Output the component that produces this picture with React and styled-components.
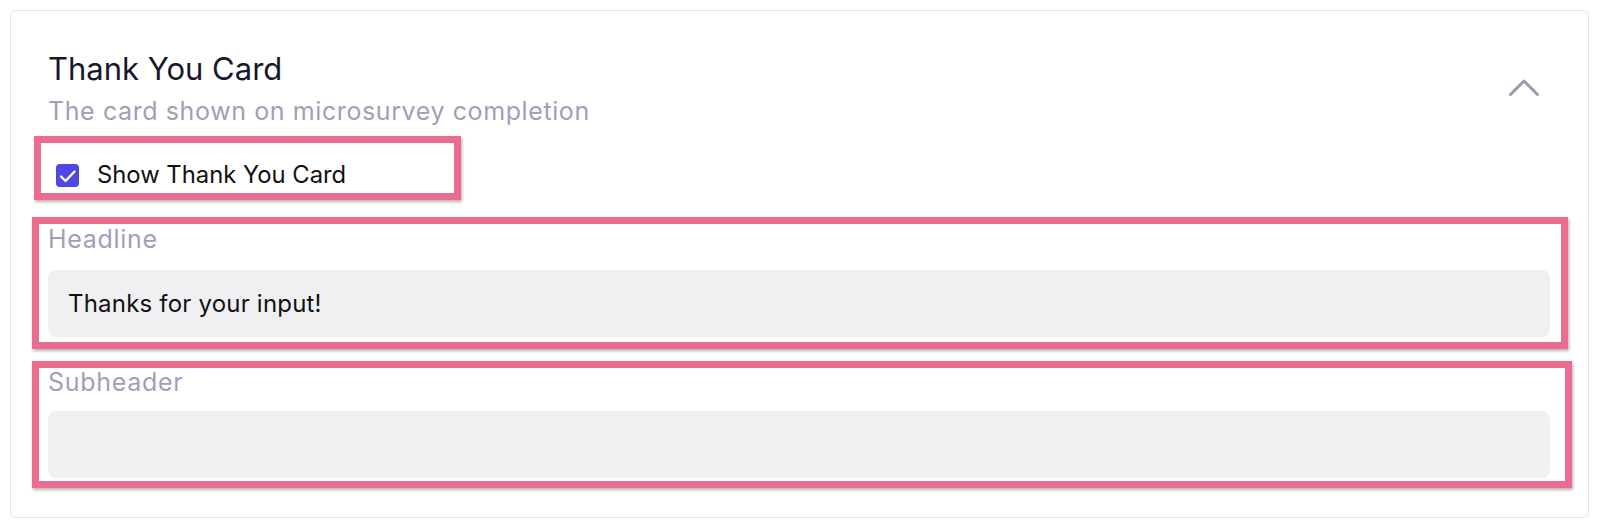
import React from 'react';
import styled, { createGlobalStyle } from 'styled-components';

const GlobalStyle = createGlobalStyle`
  body {
    margin: 0;
    background: #fff;
    font-family: Inter, "Noto Sans", "Liberation Sans", sans-serif;
  }
`;

const Card = styled.section`
  width: 1579px;
  height: 508px;
  margin: 10px 0 0 10px;
  box-sizing: border-box;
  border: 1px solid #e4e4eb;
  border-radius: 6px;
  padding: 39px 16px 0 21px;
  display: flex;
  flex-direction: column;
`;

const Header = styled.div`
  display: flex;
  justify-content: space-between;
  align-items: flex-start;
  padding-left: 16px;
`;

const Title = styled.h2`
  margin: 0;
  font-size: 31px;
  line-height: 38px;
  font-weight: 400;
  color: #17172c;
`;

const Subtitle = styled.p`
  margin: 8px 0 0 0;
  font-size: 25px;
  line-height: 30px;
  letter-spacing: 0.6px;
  color: #a19fb5;
`;

const Toggle = styled.button`
  width: 36px;
  height: 36px;
  margin: 20px 30px 0 0;
  padding: 0;
  border: none;
  background: none;
  svg {
    display: block;
  }
`;

// pink review frames round each setting
const CheckFrame = styled.label`
  width: 427px;
  height: 64px;
  margin: 10px 0 0 2px;
  box-sizing: border-box;
  border: 7px solid #ec6b90;
  box-shadow: 1px 2px 3px rgba(0, 0, 0, 0.3);
  padding: 18px 0 4px 15px;
  display: flex;
  align-items: center;
  gap: 18px;
  font-size: 23.8px;
  line-height: 28px;
  color: #111;
`;

const Box = styled.span`
  width: 23px;
  height: 23px;
  border-radius: 4px;
  background: #4f46e5;
  display: flex;
  align-items: center;
  justify-content: center;
`;

const FieldFrame = styled.div`
  margin: ${p => p.$mt}px ${p => p.$mr}px 0 0;
  box-sizing: border-box;
  border: 7px solid #ec6b90;
  box-shadow: 1px 2px 3px rgba(0, 0, 0, 0.3);
  padding: ${p => p.$pt}px ${p => p.$pr}px ${p => p.$pb}px 9px;
  display: flex;
  flex-direction: column;
  gap: ${p => p.$gap}px;
`;

const Label = styled.span`
  font-size: 25px;
  line-height: 24px;
  letter-spacing: 0.7px;
  color: #a19fb5;
`;

const Input = styled.input`
  width: 100%;
  height: 67px;
  box-sizing: border-box;
  border: none;
  outline: none;
  border-radius: 8px;
  background: #f0f0f3;
  padding: 0 20px;
  font-family: inherit;
  font-size: 24px;
  letter-spacing: 0.2px;
  color: #111;
`;

const App = () => {
  return (
    <>
      <GlobalStyle />
      <Card>
        <Header>
          <div>
            <Title>Thank You Card</Title>
            <Subtitle>The card shown on microsurvey completion</Subtitle>
          </div>
          <Toggle aria-label="collapse">
            <svg width="36" height="36" viewBox="0 0 36 36" fill="none">
              <polyline points="4.5,24.5 18,11 31.5,24.5" stroke="#9b9aae" strokeWidth="3" strokeLinecap="round" strokeLinejoin="round" />
            </svg>
          </Toggle>
        </Header>
        <CheckFrame>
          <Box>
            <svg width="23" height="23" viewBox="0 0 23 23" fill="none">
              <polyline points="5,12.5 9.5,17 18.5,7.5" stroke="#fff" strokeWidth="2.4" strokeLinecap="round" strokeLinejoin="round" />
            </svg>
          </Box>
          Show Thank You Card
        </CheckFrame>
        <FieldFrame $mt={17} $mr={4} $pt={3} $pr={11} $pb={5} $gap={19}>
          <Label>Headline</Label>
          <Input defaultValue="Thanks for your input!" />
        </FieldFrame>
        <FieldFrame $mt={12} $mr={0} $pt={2} $pr={15} $pb={3} $gap={17}>
          <Label>Subheader</Label>
          <Input defaultValue="" />
        </FieldFrame>
      </Card>
    </>
  );
};

export default App;
